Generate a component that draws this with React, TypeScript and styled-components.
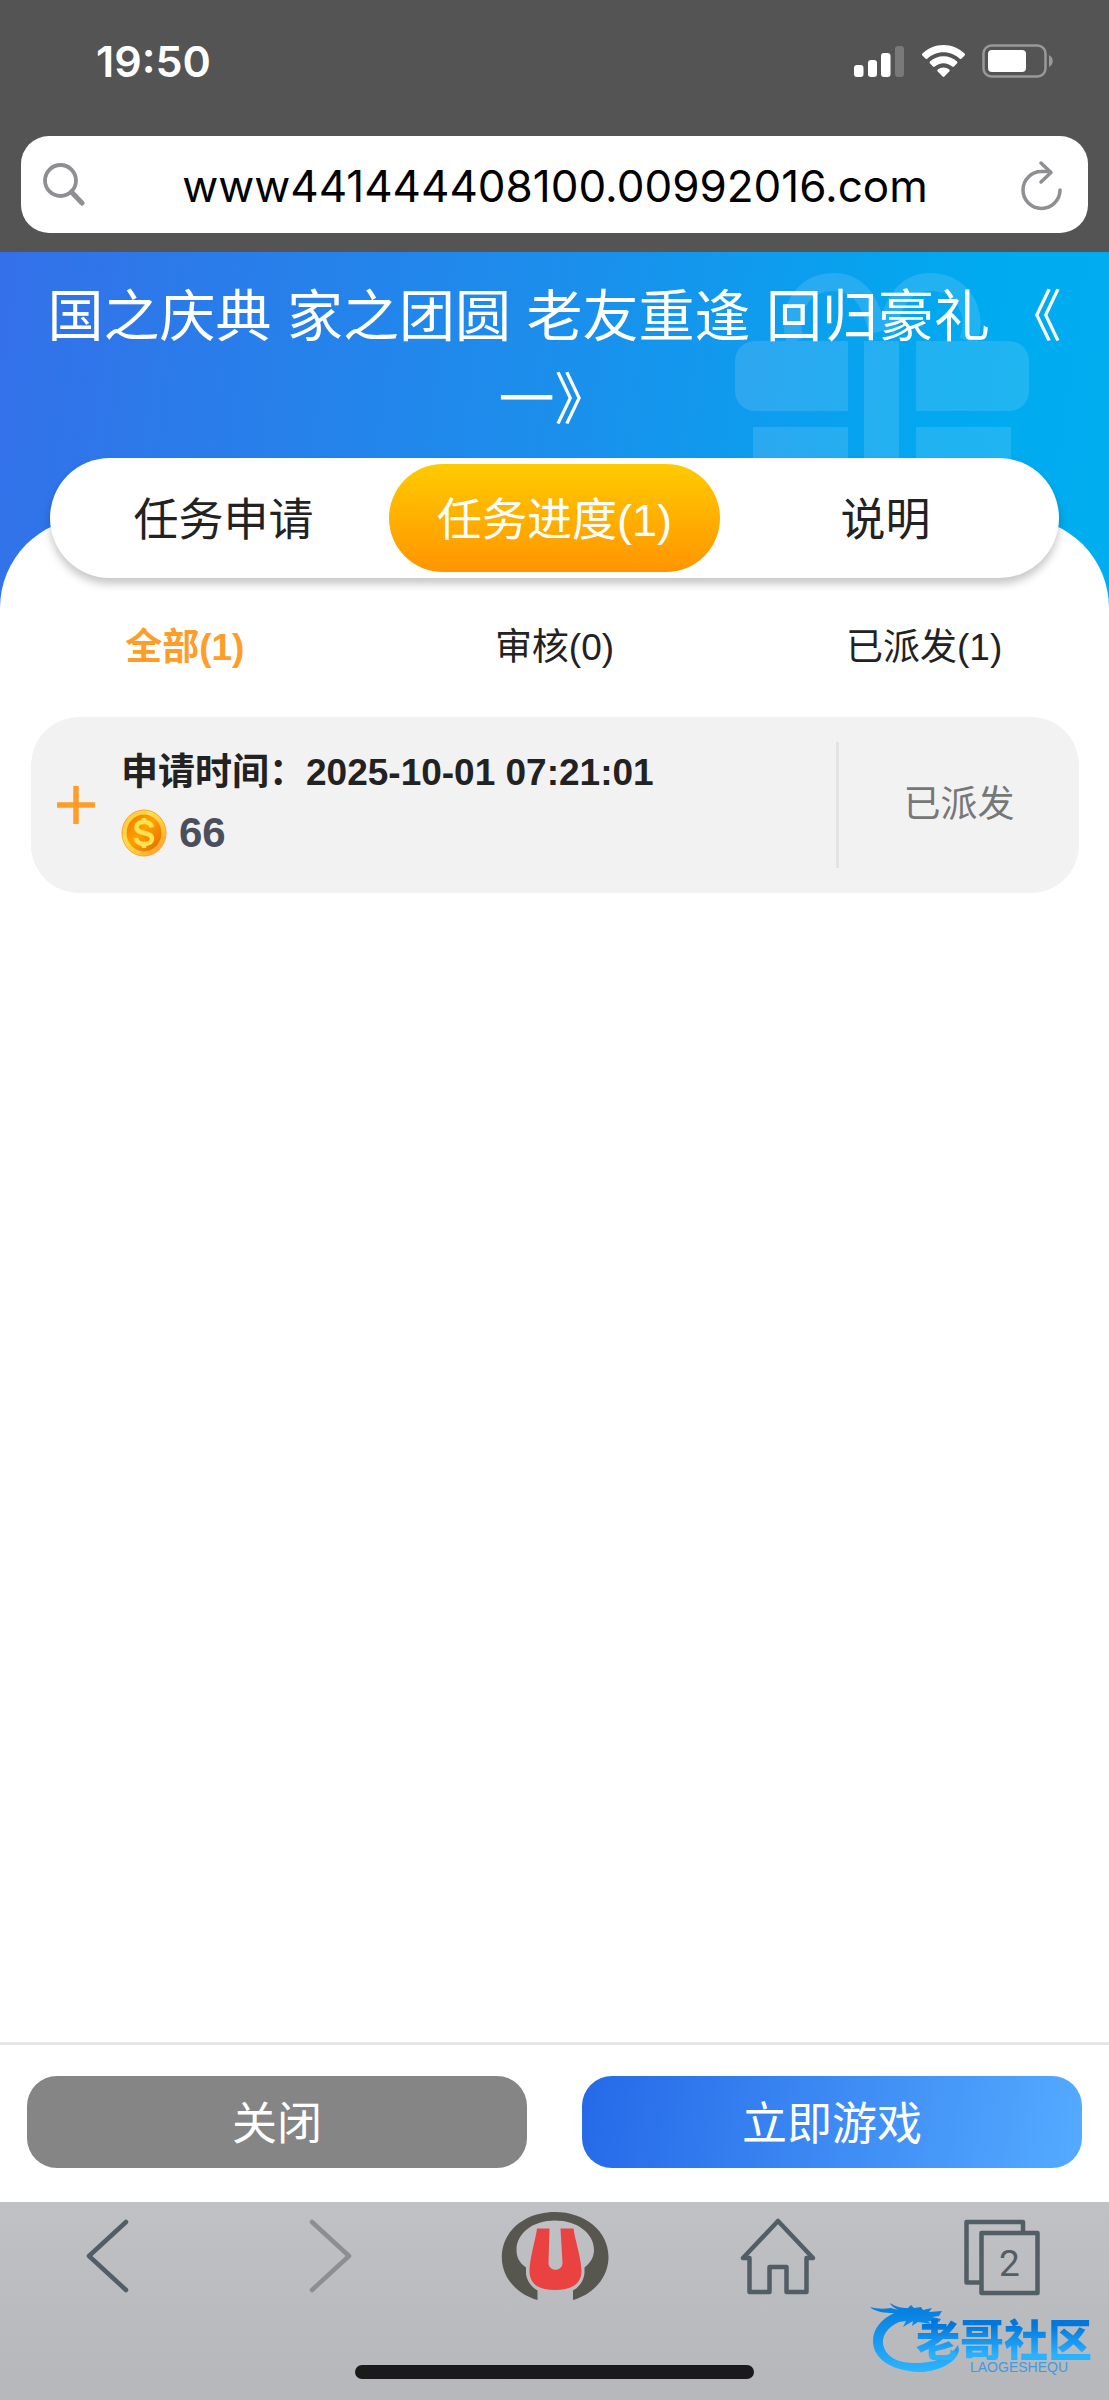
import React, { useState } from "react";
import styled, { createGlobalStyle } from "styled-components";

const ORANGE = "#ff9d28";
const SLATE = "#525e66";

const GlobalStyle = createGlobalStyle`
  * { box-sizing: border-box; }
  body {
    margin: 0;
    background: #fff;
    color: #222;
    font-family: "Liberation Sans", "Noto Sans CJK SC", sans-serif;
  }
  button, input { font: inherit; color: inherit; border: 0; padding: 0; background: none; }
  button { cursor: pointer; }
  svg { display: block; }
`;

const Page = styled.div`
  position: relative;
  display: flex;
  flex-direction: column;
  min-height: 100vh;
  overflow: hidden;
`;

const BrowserTop = styled.header`
  background: #545454;
  padding: 0 21px 19px;
`;

const StatusBar = styled.div`
  display: flex;
  align-items: center;
  justify-content: space-between;
  height: 136px;
  padding: 0 34px 14px 75px;
`;

const Clock = styled.time`
  font: 600 43px/56px Inter, sans-serif;
  color: #fff;
`;

const StatusIcons = styled.div`
  display: flex;
  align-items: center;
  gap: 17px;
`;

const AddressBar = styled.form`
  display: flex;
  align-items: center;
  justify-content: space-between;
  height: 97px;
  padding: 0 25px 0 22px;
  border-radius: 28px;
  background: #fff;
`;

const AddressInput = styled.input`
  flex: 1;
  min-width: 0;
  height: 97px;
  padding: 3px 0 0 4px;
  text-align: center;
  font: 400 44px/94px Inter, sans-serif;
  color: #000;
  outline: none;
`;

const Hero = styled.section`
  position: relative;
  padding: 23px 40px 167px;
  background: linear-gradient(98deg, #3470e9 0%, #1b8fec 50%, #00aaf0 85%, #00aeef 100%);
`;

const GiftArt = styled.svg`
  position: absolute;
  top: 20px;
  right: 80px;
`;

const HeroTitle = styled.h1`
  position: relative;
  margin: 0;
  font-size: 56px;
  font-weight: 400;
  line-height: 83px;
  text-align: center;
  color: #fff;
  text-spacing-trim: space-all;
`;

const Panel = styled.main`
  position: relative;
  flex: 1;
  margin-top: -90px;
  background: #fff;
  border-radius: 90px 90px 0 0;
`;

const TabBar = styled.nav`
  display: grid;
  grid-template-columns: repeat(3, 1fr);
  height: 120px;
  margin: -60px 50px 0;
  padding: 6px 8px;
  border-radius: 60px;
  background: #fff;
  box-shadow: 0 6px 8px rgba(0, 0, 0, 0.22);
`;

const Tab = styled.button<{ $active: boolean }>`
  padding-top: 6px;
  border-radius: 54px;
  font-size: 45px;
  font-weight: 400;
  line-height: 102px;
  color: ${(p) => (p.$active ? "#fff" : "#222")};
  background: ${(p) => (p.$active ? "linear-gradient(#ffcb00, #ff9500)" : "none")};
`;

const Filters = styled.div`
  display: grid;
  grid-template-columns: repeat(3, 1fr);
  margin: 39px 0 38px;
`;

const Filter = styled.button<{ $active: boolean }>`
  font-size: 37px;
  line-height: 62px;
  font-weight: ${(p) => (p.$active ? 700 : 400)};
  color: ${(p) => (p.$active ? ORANGE : "#222")};
`;

const RecordCard = styled.article`
  display: flex;
  align-items: center;
  height: 176px;
  margin: 0 30px 0 31px;
  border-radius: 48px;
  background: #f2f2f2;
`;

const ExpandButton = styled.button`
  display: grid;
  place-items: center;
  width: 90px;
  height: 100%;
`;

const RecordInfo = styled.div`
  flex: 1;
  padding-bottom: 4px;
`;

const RecordTime = styled.p`
  margin: 0;
  font-size: 37px;
  font-weight: 700;
  line-height: 56px;
  text-spacing-trim: space-all;
`;

const Reward = styled.p`
  display: flex;
  align-items: center;
  gap: 12px;
  margin: 4px 0 0;
  font-size: 42px;
  font-weight: 700;
  line-height: 56px;
  color: #4a4f5b;
`;

const RecordStatus = styled.div`
  width: 243px;
  border-left: 3px solid #e3e3e3;
  font-size: 37px;
  line-height: 126px;
  text-align: center;
  color: #777;
`;

const Actions = styled.footer`
  display: grid;
  grid-template-columns: 1fr 1fr;
  gap: 55px;
  padding: 31px 27px 34px;
  border-top: 3px solid #e6e6e6;
  background: #fff;
`;

const ActionButton = styled.button<{ $primary?: boolean }>`
  height: 92px;
  padding-top: 6px;
  border-radius: 30px;
  font-size: 45px;
  line-height: 86px;
  color: #fff;
  background: ${(p) => (p.$primary ? "linear-gradient(100deg, #2569e8, #54abff)" : "#858585")};
`;

const BrowserBottom = styled.div`
  display: flex;
  flex-direction: column;
  align-items: center;
  justify-content: space-between;
  height: 198px;
  padding: 9px 0 21px;
  background: linear-gradient(#c0c1c5, #b6b7bb);
`;

const Toolbar = styled.nav`
  display: flex;
  justify-content: space-between;
  align-self: stretch;
  padding: 0 53px;
`;

const ToolButton = styled.button`
  display: grid;
  place-items: center;
  width: 108px;
  height: 90px;
  color: ${SLATE};
  &:disabled { color: #8b8f94; }
`;

const HomeIndicator = styled.div`
  width: 36%;
  height: 14px;
  border-radius: 7px;
  background: #1a1a1a;
`;

const Watermark = styled.div`
  position: absolute;
  right: 17px;
  bottom: 26px;
  width: 222px;
  height: 72px;
  pointer-events: none;
`;

const WatermarkText = styled.div`
  position: absolute;
  right: 0;
  bottom: 0;
  display: flex;
  flex-direction: column;
  align-items: center;
`;

const WatermarkName = styled.strong`
  font: 900 44px/44px "Noto Sans CJK SC", sans-serif;
  color: transparent;
  background: linear-gradient(#0077dc 20%, #2bb2ff 90%);
  background-clip: text;
  -webkit-background-clip: text;
`;

const WatermarkLatin = styled.small`
  margin-left: 30px;
  font: 400 14px/14px "Liberation Sans", sans-serif;
  color: #3e9be0;
`;

const SignalIcon = () => (
  <svg width="51" height="33" viewBox="0 0 51 33" fill="#fff" aria-hidden="true">
    <rect x="0" y="20" width="9.500" height="12" rx="3" />
    <rect x="14" y="15" width="9" height="17" rx="3" />
    <rect x="27" y="8" width="9.500" height="24" rx="3" />
    <rect x="41" y="1" width="9" height="31" rx="3" opacity="0.22" />
  </svg>
);

const WifiIcon = () => (
  <svg width="43" height="33" viewBox="0 0 43 33" fill="#fff" aria-hidden="true">
    <path d="M21.500 0C29.500 0 37 3.200 42.600 8.600q.8.9 0 1.800l-3 3.200q-.9.9-1.800.1C33.400 9.600 27.700 7.200 21.500 7.200S9.600 9.600 5.200 13.700q-.9.8-1.800-.1l-3-3.200q-.8-.9 0-1.800C6 3.200 13.500 0 21.500 0Z" />
    <path d="M21.500 11.200c5.200 0 9.900 2 13.500 5.300q.9.900.1 1.800l-3.100 3.200q-.9.900-1.800.1c-2.400-2-5.400-3.300-8.700-3.300s-6.300 1.300-8.700 3.300q-.9.800-1.800-.1l-3.100-3.200q-.8-.9.100-1.800c3.600-3.300 8.300-5.300 13.500-5.300Z" />
    <path d="M21.500 22.400c2.200 0 4.200.8 5.800 2.100q.9.900.1 1.800l-5 5.200q-.9.900-1.800 0l-5-5.200q-.8-.9.100-1.800c1.600-1.300 3.600-2.100 5.800-2.100Z" />
  </svg>
);

const BatteryIcon = () => (
  <svg width="72" height="34" viewBox="0 0 72 34" aria-hidden="true">
    <rect x="1.500" y="1.500" width="62" height="31" rx="8" fill="none" stroke="#999" strokeWidth="2.500" />
    <rect x="6" y="6" width="38" height="22" rx="4" fill="#fff" />
    <path d="M67 11c5 2.500 5 9.500 0 12Z" fill="#999" />
  </svg>
);

const SearchIcon = () => (
  <svg width="42" height="44" viewBox="0 0 42 44" fill="none" stroke="#8e8e93" strokeLinecap="round" aria-hidden="true">
    <circle cx="17.500" cy="17.500" r="15.500" strokeWidth="3.800" />
    <path d="M28.500 29 39 40" strokeWidth="5" />
  </svg>
);

const ReloadIcon = () => (
  <svg width="42" height="52" viewBox="0 0 42 52" fill="none" stroke="#8e8e93" strokeWidth="3.500" strokeLinecap="round" strokeLinejoin="round" aria-hidden="true">
    <path d="M39 31A18.500 18.500 0 1 1 20.500 12.500H29" />
    <path d="M20 4 30 13.500 20 23" />
  </svg>
);

const PlusIcon = () => (
  <svg width="40" height="40" viewBox="0 0 40 40" stroke={ORANGE} strokeWidth="5.500" aria-hidden="true">
    <path d="M1 20H39M20 1V39" />
  </svg>
);

const CoinIcon = () => (
  <svg width="46" height="48" viewBox="0 0 46 48" aria-hidden="true">
    <defs>
      <linearGradient id="coinRim" x1="0" y1="0" x2="1" y2="1">
        <stop offset="0" stopColor="#ffb938" />
        <stop offset="0.350" stopColor="#ffe04a" />
        <stop offset="0.650" stopColor="#ffc83a" />
        <stop offset="1" stopColor="#ff8f24" />
      </linearGradient>
      <linearGradient id="coinFace" x1="0" y1="0" x2="1" y2="1">
        <stop offset="0" stopColor="#f07800" />
        <stop offset="0.450" stopColor="#ffa000" />
        <stop offset="1" stopColor="#e66400" />
      </linearGradient>
    </defs>
    <ellipse cx="23" cy="24" rx="22" ry="23" fill="url(#coinRim)" stroke="#ffa22e" />
    <ellipse cx="23" cy="24" rx="17.500" ry="18.500" fill="url(#coinFace)" />
    <path d="M31 18.500C30 14.500 26.500 13 23 13c-4 0-7.500 2-7.500 5.500 0 7.500 15.500 3.500 15.500 11 0 3.500-3.500 5.500-8 5.500-4 0-7.500-1.800-8-6M23 9v4M23 35v4" fill="none" stroke="#ffe24f" strokeWidth="4.500" />
  </svg>
);

const ChevronIcon = ({ forward }: { forward?: boolean }) => (
  <svg width="44" height="74" viewBox="0 0 44 74" fill="none" stroke="currentColor" strokeWidth="4.500" strokeLinecap="round" strokeLinejoin="round" aria-hidden="true">
    <path d={forward ? "M3 3 40 37 3 71" : "M41 3 4 37 41 71"} />
  </svg>
);

const BrandIcon = () => (
  <svg width="108" height="90" viewBox="0 0 108 90" aria-hidden="true">
    <path fill="#57564f" d="M36.500 89V79.500C30 76 25.500 69 25 62.500V56.500C18 51.500 15.500 46 15.500 39 15.500 22 32 9.500 54 9.500S93 22 93 39c0 7-3.500 13-9.500 17.500V62.500C82.500 70 78.500 76 72 79.500V89C93 83 107.500 66 107.500 46 107.500 20 84 1 54 1S.8 20 .8 46C.8 66 15 83 36.500 89Z" />
    <path fill="#e94240" d="M36 17.500H48.500L47.500 52C47.500 61 61.500 61 61.500 52L59.500 17.500H72.500C74 29 80.500 48 80.500 60 80.500 73.500 70 79 54 79S28.500 73.500 28.500 60C28.500 48 34.500 29 36 17.500Z" />
  </svg>
);

const HouseIcon = () => (
  <svg width="76" height="78" viewBox="0 0 76 78" fill="none" stroke="currentColor" strokeWidth="4.500" strokeLinejoin="round" aria-hidden="true">
    <path d="M38 4 3 41H9.500V75H29.500V50H46.500V75H66.500V41H73Z" />
  </svg>
);

const PagesIcon = () => (
  <svg width="78" height="80" viewBox="0 0 78 80" fill="none" stroke="currentColor" strokeWidth="4.500" strokeLinejoin="round" aria-hidden="true">
    <path d="M18 66.500H3.500V6H60V17" />
    <rect x="18.500" y="17" width="56" height="60" />
    <text x="46.500" y="60" textAnchor="middle" fontFamily="Roboto, sans-serif" fontSize="37" fontWeight="400" fill="currentColor" stroke="none">2</text>
  </svg>
);

const DragonMark = () => (
  <svg width="222" height="72" viewBox="0 0 222 72" aria-hidden="true">
    <defs>
      <linearGradient id="dragon" x1="0" y1="0" x2="0" y2="1">
        <stop offset="0.100" stopColor="#057fe0" />
        <stop offset="1" stopColor="#2bb4ff" />
      </linearGradient>
    </defs>
    <path
      fill="url(#dragon)"
      d="M0 5C7 7 14 7 21 6L28 8C25 6 21 4 20 1C26 5 31 6 38 6L41 3L44 6L51 5L53 8L62 6L59 10L72 9L69 14L62 15L71 17L69 20L58 19L61 22L48 20L42 24L43 19L33 25L36 19L29 20C18 25 12 33 13 42C16 57 31 62 50 61C69 60 82 53 88 43L89 48C87 60 69 70 49 70C22 69 3 57 3 39C3 26 12 17 24 11C15 11 5 10 0 5Z"
    />
  </svg>
);

const tabs = ["任务申请", "任务进度(1)", "说明"];
const filters = ["全部(1)", "审核(0)", "已派发(1)"];

export default function App() {
  const [tab, setTab] = useState(1);
  const [filter, setFilter] = useState(0);

  return (
    <Page>
      <GlobalStyle />
      <BrowserTop>
        <StatusBar>
          <Clock>19:50</Clock>
          <StatusIcons>
            <SignalIcon />
            <WifiIcon />
            <BatteryIcon />
          </StatusIcons>
        </StatusBar>
        <AddressBar onSubmit={(e) => e.preventDefault()}>
          <SearchIcon />
          <AddressInput aria-label="网址" defaultValue="www441444408100.00992016.com" />
          <button type="button" aria-label="刷新">
            <ReloadIcon />
          </button>
        </AddressBar>
      </BrowserTop>

      <Hero>
        <GiftArt width="294" height="230" viewBox="0 0 294 230" fill="#fff" opacity="0.12" aria-hidden="true">
          <path d="M61 69C50 42 66 10 98 10c32 0 40 30 45 50M233 69c11-27-5-59-37-59-32 0-40 30-45 50" fill="none" stroke="#fff" strokeWidth="18" />
          <path d="M113 69V139H20A20 20 0 0 1 0 119V89A20 20 0 0 1 20 69ZM129 69H164V230H129ZM181 69H274A20 20 0 0 1 294 89V119A20 20 0 0 1 274 139H181ZM18 155H113V230H18ZM181 155H276V230H181Z" />
        </GiftArt>
        <HeroTitle>
          国之庆典 家之团圆 老友重逢 回归豪礼 《<br />一》
        </HeroTitle>
      </Hero>

      <Panel>
        <TabBar>
          {tabs.map((label, i) => (
            <Tab key={label} type="button" $active={i === tab} onClick={() => setTab(i)}>
              {label}
            </Tab>
          ))}
        </TabBar>
        <Filters>
          {filters.map((label, i) => (
            <Filter key={label} type="button" $active={i === filter} onClick={() => setFilter(i)}>
              {label}
            </Filter>
          ))}
        </Filters>
        <RecordCard>
          <ExpandButton type="button" aria-label="展开">
            <PlusIcon />
          </ExpandButton>
          <RecordInfo>
            <RecordTime>申请时间：2025-10-01 07:21:01</RecordTime>
            <Reward>
              <CoinIcon />
              66
            </Reward>
          </RecordInfo>
          <RecordStatus>已派发</RecordStatus>
        </RecordCard>
      </Panel>

      <Actions>
        <ActionButton type="button">关闭</ActionButton>
        <ActionButton type="button" $primary>
          立即游戏
        </ActionButton>
      </Actions>

      <BrowserBottom>
        <Toolbar>
          <ToolButton type="button" aria-label="后退">
            <ChevronIcon />
          </ToolButton>
          <ToolButton type="button" aria-label="前进" disabled>
            <ChevronIcon forward />
          </ToolButton>
          <ToolButton type="button" aria-label="菜单">
            <BrandIcon />
          </ToolButton>
          <ToolButton type="button" aria-label="主页">
            <HouseIcon />
          </ToolButton>
          <ToolButton type="button" aria-label="标签页">
            <PagesIcon />
          </ToolButton>
        </Toolbar>
        <HomeIndicator />
      </BrowserBottom>

      <Watermark>
        <DragonMark />
        <WatermarkText>
          <WatermarkName>老哥社区</WatermarkName>
          <WatermarkLatin>LAOGESHEQU</WatermarkLatin>
        </WatermarkText>
      </Watermark>
    </Page>
  );
}
